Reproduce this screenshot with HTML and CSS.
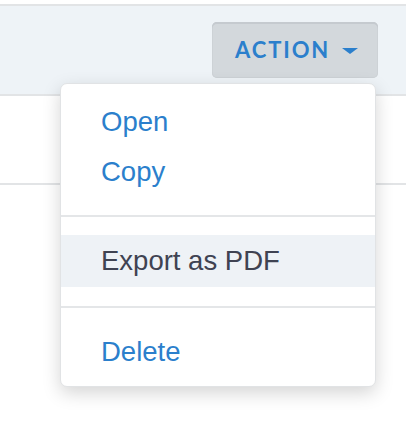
FILE: index.html
```html
<!DOCTYPE html>
<html>
<head>
<meta charset="utf-8">
<link rel="stylesheet" href="styles.css">
</head>
<body>
<div class="page">
  <div class="topgap"></div>
  <header class="toolbar">
    <div class="action-wrap">
      <button class="action-btn">ACTION<span class="caret"></span></button>
      <div class="menu">
        <div class="section first">
          <a class="item">Open</a>
          <a class="item">Copy</a>
        </div>
        <div class="section mid">
          <a class="item hl">Export as PDF</a>
        </div>
        <div class="section last">
          <a class="item">Delete</a>
        </div>
      </div>
    </div>
  </header>
  <div class="row"></div>
</div>
</body>
</html>
```
FILE: styles.css
```css
html, body {
  margin: 0;
  padding: 0;
  background: #ffffff;
}
.page {
  width: 406px;
  min-height: 426px;
  font-family: "Liberation Sans", Arial, sans-serif;
}
.topgap {
  height: 4px;
  background: #ffffff;
  border-bottom: 2px solid #e2e4e6;
}
.toolbar {
  height: 88px;
  background: #eef3f7;
  border-bottom: 2px solid #e2e4e6;
  display: flex;
  align-items: center;
  justify-content: flex-end;
  padding-right: 28px;
}
.action-wrap {
  position: relative;
  z-index: 5;
}
.action-btn {
  display: flex;
  align-items: center;
  width: 166px;
  height: 56px;
  padding: 0 0 0 23px;
  margin: 0;
  border: none;
  border-radius: 5px;
  background: #d3d8dc;
  box-shadow: inset 0 2px 0 #c5cacf, inset 0 0 0 1px #cdd2d6;
  font-family: Lato, "Liberation Sans", sans-serif;
  font-weight: 700;
  font-size: 22px;
  letter-spacing: 1.9px;
  color: #2b7fcc;
  line-height: 1;
  box-sizing: border-box;
}
.caret {
  display: inline-block;
  width: 0;
  height: 0;
  margin-left: 12px;
  margin-top: 2px;
  border-left: 8px solid transparent;
  border-right: 8px solid transparent;
  border-top: 6px solid #2b7fcc;
}
.menu {
  position: absolute;
  top: 61px;
  right: 2px;
  width: 316px;
  box-sizing: border-box;
  background: #ffffff;
  border: 1px solid #e1e3e5;
  border-radius: 7px;
  box-shadow: 0 6px 18px rgba(0, 0, 0, 0.17);
}
.section {
  display: flex;
  flex-direction: column;
}
.section.first {
  padding: 13px 0 18px;
  border-bottom: 2px solid #e4e6e8;
}
.section.mid {
  padding: 18px 0 19px;
  border-bottom: 2px solid #e4e6e8;
}
.section.last {
  padding: 19px 0 9px;
}
.item {
  display: block;
  height: 50px;
  line-height: 50px;
  padding-left: 40px;
  font-size: 27.5px;
  color: #2b7fcc;
  text-decoration: none;
}
.item.hl {
  height: 52px;
  line-height: 52px;
  background: #eef2f6;
  color: #3f4352;
}
.row {
  height: 87px;
  border-bottom: 2px solid #e2e4e6;
}
```
